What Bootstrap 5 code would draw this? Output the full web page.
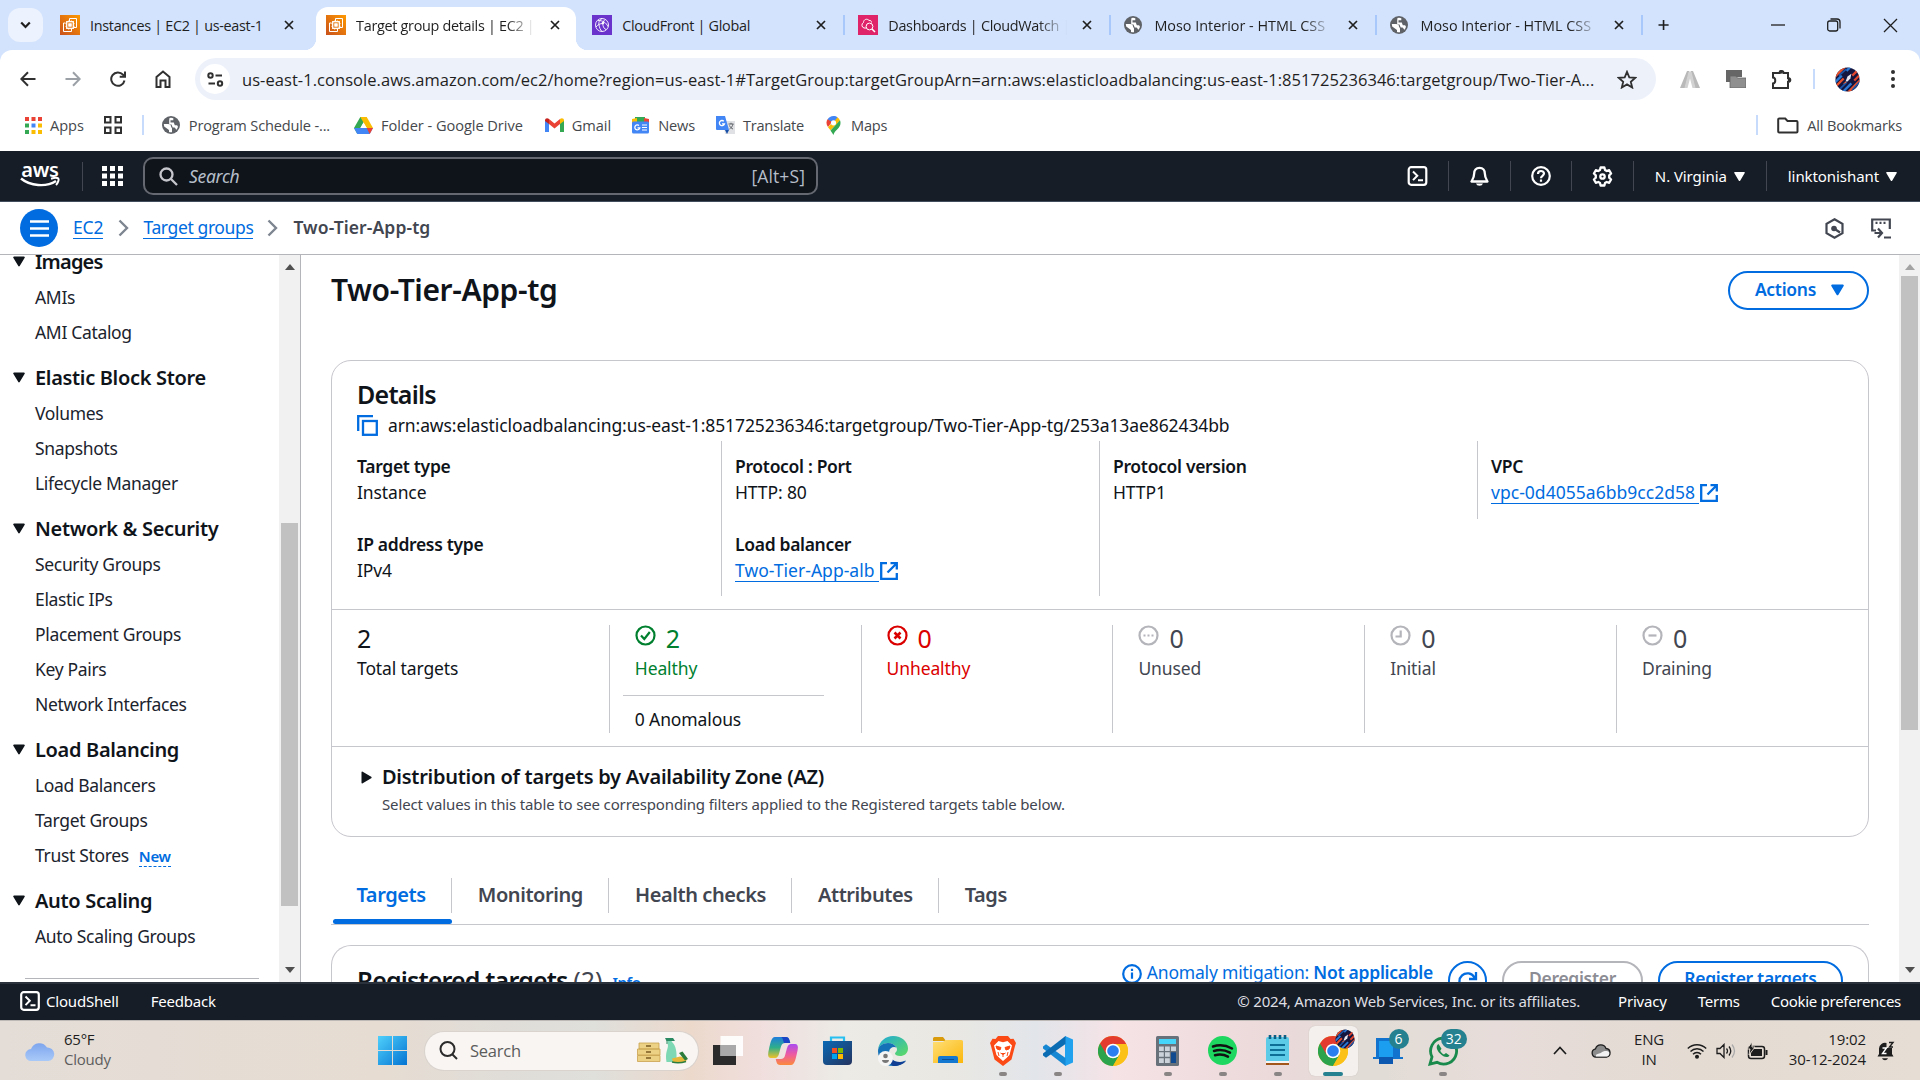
<!DOCTYPE html>
<html lang="en">
<head>
<meta charset="utf-8">
<meta name="viewport" content="width=device-width, initial-scale=1">
<title>Target group details | EC2 | us-east-1</title>
<link rel="stylesheet" href="https://cdn.jsdelivr.net/npm/bootstrap@5.3.0/dist/css/bootstrap.min.css">
<style>
:root{--ember:"Noto Sans","Open Sans",sans-serif;--segoe:"Open Sans","Noto Sans",sans-serif;--blue:#006ce0;--line:#c6c6cd;--ink:#0f141a}
html,body{height:1080px;overflow:hidden}
body{font-family:var(--ember);font-size:17.5px;line-height:25px;color:var(--ink);letter-spacing:-.12px;background:#fff}
svg{display:block;flex:none}
.strong{font-weight:600}
/* browser chrome */
.browser{font-family:var(--segoe);height:151px;background:#d3e3fd}
.strip{height:50px;letter-spacing:-.3px;font-size:14.4px;color:#1f1f1f}
.tabsearch{width:35px;height:34px;margin-left:8px;border-radius:12px;background:#ecf2fe}
.btab{width:266.1px;height:43px;margin-top:7px;padding:0 0 7px 10px;position:relative;flex:none}
.btab .ttl{width:179px;margin-left:10px;white-space:nowrap;-webkit-mask-image:linear-gradient(90deg,#000 84%,transparent)}
.btab .ttl.whole{-webkit-mask-image:none}
.btab .ttl.wide{letter-spacing:0}
.btab .shut{margin-left:15px}
.btab .sep{width:2px;height:20px;background:#a8c7fa;margin-left:17px}
.btab.cur::before{content:"";position:absolute;inset:0 6px 0 0;background:#fff;border-radius:12px 12px 0 0}
.btab.cur .foot{position:absolute;bottom:0;width:12px;height:12px}
.btab.cur .foot.l{left:-12px;background:radial-gradient(circle at 0 0,transparent 12px,#fff 12.5px)}
.btab.cur .foot.r{right:-6px;background:radial-gradient(circle at 100% 0,transparent 12px,#fff 12.5px)}
.btab>*{position:relative}
.toolbar{height:101px;background:#fff;border-radius:12px 12px 0 0}
.addr{height:58px}
.pill{width:1461px;height:42px;border-radius:21px;background:#edf1fa;margin-left:20px}
.tune{height:30px;width:30px;border-radius:50%;background:#fff;margin-left:5px}
.url{font-size:16.5px;letter-spacing:.05px;width:1356px;margin-left:12px;white-space:nowrap;color:#1f1f1f}
.vsep{width:2px;height:20px;background:#c7dbfd}
.marks{height:43px;font-size:14.6px;letter-spacing:-.05px;color:#45484c}
.marks a{display:flex;align-items:center;gap:8px;color:inherit;text-decoration:none;white-space:nowrap}
/* console header */
.awsbar{height:51px;background:#161d26;color:#fff;border-bottom:1px solid #414d5c}
.awslogo{width:40px;margin-left:20px}
.awslogo b{font-size:20px;line-height:15px;font-weight:600;letter-spacing:-.3px}
.hsearch{width:675px;height:38px;border:2px solid #656871;border-radius:10px;background:#0f141a;color:#b6bec9;padding:0 11px 0 14px;letter-spacing:-.3px}
.hsep{width:1px;height:29px;background:#424650}
.hcell{width:61.6px;height:30px;border-right:1px solid #424650}
.small15{font-size:15px;letter-spacing:-.08px}
.crumbs{height:53px;border-bottom:1px solid #b4b4bb}
.menu{width:38px;height:38px;border-radius:50%;background:var(--blue);margin-left:20px}
.lnk{color:var(--blue);text-decoration:none;border-bottom:1.5px solid var(--blue);line-height:21px;display:inline-block}
/* body */
.shell{height:727px}
.side{width:301px;flex:none;border-right:1px solid #b4b4bb;overflow:hidden}
.sidenav{width:279px;flex:none;overflow:hidden;padding-left:13px;letter-spacing:-.33px}
.sidenav h3{font-size:20px;font-weight:600;letter-spacing:-.33px;height:37px;margin:9px 0 0;display:flex;align-items:center;gap:10px}
.sidenav section:first-child h3{margin-top:-12px}
.sidenav a{display:flex;align-items:center;height:35px;padding-left:22px;color:#1b232d;text-decoration:none}
.sidenav hr{margin:24px 20px 0 12px;border:0;border-top:1px solid #b4b4bb;opacity:1}
.newtag{font-size:15px;color:var(--blue);font-weight:600;border-bottom:1.5px dashed var(--blue);line-height:20px;margin-left:10px;position:relative;top:1px}
.sbar{width:21px;flex:none;background:#f1f1f1;padding:9px 0 9px}
.thumb{width:17px;background:#c1c1c1}
.main{overflow:hidden;min-width:0;padding:0 30px 0 30px}
h1{font-size:30px;font-weight:600;letter-spacing:-.4px;line-height:38px;margin:0}
h2{font-size:25px;font-weight:600;letter-spacing:-.75px;line-height:30px;margin:0}
.pillbtn{height:39px;border:2px solid var(--blue);color:var(--blue);border-radius:20px;font-weight:600;letter-spacing:-.3px;padding:0 24px;font-size:17.5px;background:#fff}
.pillbtn:disabled{border-color:#b4b4bb;color:#8c8c94;opacity:1}
.box{border:1px solid var(--line);border-radius:20px}
.detail{height:248px;padding:18px 0 0 11px}
.kv{width:378px;height:77.5px;padding:11px 0 0 13px;border-left:1px solid transparent}
.kv.ln{border-color:var(--line)}
.kv b{display:block;font-weight:600;letter-spacing:-.32px;line-height:28px}
.kv .lnk{margin-top:2px;letter-spacing:.03px}
.stats{height:137px;border-top:1px solid var(--line);padding:15px 0 0 25px}
.stat{width:251.8px;flex:none;height:108px;border-left:1px solid var(--line);padding-left:25px}
.stat:first-child{border:0;padding-left:0}
.num{font-size:25px;line-height:26px;letter-spacing:0}
.cap{margin-top:5px}
.good{color:#00802f}.bad{color:#db0000}.dim{color:#424650}
.stat.dim svg{color:#b4b4bb}
.anom{border-top:1px solid var(--line);width:201px;margin:14px 0 0 -12px;padding:11px 0 0 12px}
.az{height:90px;border-top:1px solid var(--line);padding:15px 0 0 29px}
.az h3{font-size:20px;font-weight:600;letter-spacing:-.27px;line-height:30px;margin:0}
.tabline{border-bottom:1px solid var(--line);height:55px;margin-top:33px}
.tabline .nav-item{padding-top:8px}
.tabline .tb{display:block;height:35px;line-height:33px;padding:0 25.5px;font-size:20px;font-weight:600;letter-spacing:-.42px;color:#424650;border-right:1px solid var(--line);text-decoration:none}
.tabline .nav-item:last-child .tb{border:0}
.tabline .tb.on{color:var(--blue)}
.bar5{height:5px;background:var(--blue);border-radius:3px;margin:6px 0 0 2px}
.reg{height:60px;margin-top:20px;padding:15px 25px 0;border-bottom:0;border-radius:20px 20px 0 0}
.foot2{height:38px;background:#161d26;border-top:2px solid #2b323b;color:#fff}
/* taskbar */
.task{height:60px;font-family:var(--segoe);font-size:15px;color:#1d1d1d;letter-spacing:-.25px;border-top:1px solid #bdb9b6;background:linear-gradient(90deg,#e4ddd7 0,#e6dcd2 20%,#e0ddd8 26%,#dfdfdb 31%,#ecd9cc 36%,#f0dedd 39.5%,#ecebe6 44%,#eae8e2 49%,#e2e5ea 54%,#f5e3e6 58%,#ecd9da 66%,#e1dcd6 71%,#e7dcd9 78%,#e4dbd3 88%,#e6ddd5 100%)}
.weather{width:378px;padding-left:25px;line-height:20px}
.tsearch{width:273px;height:38px;border-radius:19px;background:#f8f5f2;box-shadow:0 0 0 1px #d9d2cd;margin-left:18px;padding:0 8px 0 14px;color:#5c5c5c;font-size:16.5px}
.ticon{width:55.05px;height:60px;position:relative;display:flex;justify-content:center;align-items:center}
.ticon.open::after{content:"";position:absolute;bottom:5px;width:8px;height:4px;border-radius:2px;background:#8a8585}
.ticon.act::before{content:"";position:absolute;left:3px;right:3px;top:5px;bottom:5px;border-radius:6px;background:#f4f0ed;box-shadow:0 0 1px #b9b2ad}
.ticon.act::after{width:20px;background:#25818f}
.bdg{position:absolute;top:8px;right:7px;height:20px;min-width:20px;border-radius:10px;background:#25818f;color:#fff;font-size:14px;line-height:20px;text-align:center;padding:0 5px;letter-spacing:0}
</style>
</head>
<body>
<svg width="0" height="0" class="position-absolute">
  <defs>
    <linearGradient id="gOr" x1="0" y1="1" x2="1" y2="0"><stop stop-color="#c8511b"/><stop offset="1" stop-color="#f90"/></linearGradient>
    <linearGradient id="gWin" x1="0" y1="0" x2="1" y2="1"><stop stop-color="#4fd0fb"/><stop offset="1" stop-color="#0473d2"/></linearGradient>
    <linearGradient id="gCl" x1="0" y1="0" x2="0" y2="1"><stop stop-color="#7ea5ee"/><stop offset="1" stop-color="#a9caf8"/></linearGradient>
    <linearGradient id="gCp1" x1="0" y1="0" x2="0" y2="1"><stop stop-color="#1f7ddc"/><stop offset=".5" stop-color="#2fae8a"/><stop offset="1" stop-color="#f0c22a"/></linearGradient>
    <linearGradient id="gCp2" x1="0" y1="0" x2="0" y2="1"><stop stop-color="#a94af0"/><stop offset=".5" stop-color="#ee5aa0"/><stop offset="1" stop-color="#fb8a3c"/></linearGradient>
    <linearGradient id="gSt" x1="0" y1="0" x2="1" y2="1"><stop stop-color="#0a69b5"/><stop offset="1" stop-color="#24345f"/></linearGradient>
    <linearGradient id="gEd" x1="0" y1="0" x2="1" y2="1"><stop stop-color="#1ea8d8"/><stop offset="1" stop-color="#5fdc62"/></linearGradient>
    <linearGradient id="gFo" x1="0" y1="0" x2="1" y2="1"><stop stop-color="#ffdf78"/><stop offset="1" stop-color="#fbb70b"/></linearGradient>
    <symbol id="ec2" viewBox="0 0 20 20"><rect width="20" height="20" fill="url(#gOr)"/><g fill="none" stroke="#fff"><path d="M9.500 6V3.500h7v9H14M5.500 8H3.500v8.500h8V14"/><rect x="6.700" y="6.700" width="6.600" height="6.600" stroke-width="1.300"/><rect x="8.800" y="8.800" width="2.400" height="2.400" fill="#fff"/><path d="M5.500 8.700h1M5.500 11.300h1M13.500 8.700h1M13.500 11.300h1M8.700 5.500v1M11.300 5.500v1M8.700 13.500v1M11.300 13.500v1"/></g></symbol>
    <symbol id="cfr" viewBox="0 0 20 20"><rect width="20" height="20" fill="#6a33cc"/><g fill="none" stroke="#fff" stroke-width=".9"><circle cx="10" cy="10" r="6.500"/><path d="M10 3.500c-3 2-3.500 4-3 6.500s1 4.500 3 6.500M6 5.500c5 0 8 2 10 6M13 4.500c-2 2-2.500 4-2 6s1.500 3.500 3 4M4 12c2-2.500 4-3.500 7-3.500"/><circle cx="11" cy="8" r=".9" fill="#fff"/></g></symbol>
    <symbol id="cwt" viewBox="0 0 20 20"><rect width="20" height="20" fill="#e0246a"/><g fill="none" stroke="#fff" stroke-width="1"><path d="M8 13H6a3 3 0 0 1-.5-5.500C5.500 4.500 9 3 11 5.500c1.500-.5 2.500.5 2.500 2"/><circle cx="11.500" cy="11.500" r="3.400"/><path d="M14 14l3 3" stroke-width="1.500"/></g></symbol>
    <symbol id="globe" viewBox="0 0 18 18"><circle cx="9" cy="9" r="9" fill="#5f6368"/><path d="M1.800 8h4.200c2 0 3 1 3 2.500 0 1 1 1 1 2v3.700a7.400 7.400 0 0 1-3-.2v-2L2.200 10.500z" fill="#fff"/><path d="M7.500 2a7.300 7.300 0 0 1 3.800.2v2H8.500V6.500h3.300l1 2.800h2.300l.9 1.500a7.300 7.300 0 0 1-1.500 3c-1-.3-1-2.300-2.300-2.300h-1.500L9.500 8.500H7.200V4z" fill="#fff"/></symbol>
    <symbol id="xx" viewBox="0 0 10 10"><path d="M1 1l8 8M9 1l-8 8" stroke="#1f1f1f" stroke-width="1.700"/></symbol>
    <symbol id="dn" viewBox="0 0 12 11"><path d="M1 .5h10a.8.800 0 0 1 .7 1.200L6.700 10a.8.800 0 0 1-1.400 0L.3 1.700A.8.800 0 0 1 1 .5z" fill="currentColor"/></symbol>
    <symbol id="chv" viewBox="0 0 11 18"><path d="M1.500 1.500L9 9l-7.500 7.500" fill="none" stroke="#7d8590" stroke-width="2.400"/></symbol>
    <symbol id="shl" viewBox="0 0 20 20"><rect x="1.200" y="1.200" width="17.600" height="17.600" rx="2.500" fill="none" stroke="#fff" stroke-width="2.200"/><path d="M5.500 5.500l4.300 4.300-4.300 4.300M10.500 14.300h5" fill="none" stroke="#fff" stroke-width="2"/></symbol>
    <symbol id="ext" viewBox="0 0 18 18"><path d="M7 1.200H1.200v15.600h15.600V11M10.500 1.200h6.300v6.300M16.500 1.500L7.500 10.500" fill="none" stroke="#006ce0" stroke-width="2.300"/></symbol>
    <symbol id="chrome" viewBox="0 0 30 30"><circle cx="15" cy="15" r="15" fill="#fbc116"/><path d="M15 15L2 7.500a15 15 0 0 0 13 22.500l6.500-11z" fill="#2ba24c"/><path d="M15 15V8h13.200A15 15 0 0 0 2 7.500L8.500 18.500z" fill="#e33b2e"/><path d="M15 8h13.300A15 15 0 0 1 15 30l6.500-11.200z" fill="#fbc116"/><circle cx="15" cy="15" r="7.300" fill="#fff"/><circle cx="15" cy="15" r="5.800" fill="#2a7ef0"/></symbol>
    <clipPath id="pc"><circle cx="13" cy="13" r="12.500"/></clipPath>
    <symbol id="planet" viewBox="0 0 26 26"><g clip-path="url(#pc)"><rect width="26" height="26" fill="#14163f"/><g fill="none" stroke-width="2.400"><path d="M-2 12L12-2M0 21L9 12M12 28L28 12" stroke="#e8502c"/><path d="M-2 18l9-9M8 26l9-9M12 4l6-6" stroke="#2b7bd6"/><path d="M4 9l8-7M18 24l8-9M5 23l7-7" stroke="#1d56a8" stroke-width="1.700"/><path d="M18 9l7-7M20 14l6-6" stroke="#e0452e"/></g><path d="M11 15l2-5 4-3-1 5-3 3z" fill="#e8e9f2"/><path d="M8 18l3-3 1 1z" fill="#ff6b3a"/></g></symbol>
  </defs>
</svg>

<header class="browser">
  <div class="strip d-flex align-items-start">
    <div class="d-flex pt-2 flex-shrink-0" style="width:50px"><div class="tabsearch d-flex align-items-center justify-content-center"><svg width="11" height="8" viewBox="0 0 11 8"><path d="M1.200 1.500L5.500 6l4.300-4.500" fill="none" stroke="#1f1f1f" stroke-width="2.200"/></svg></div></div>
    <div class="btab d-flex align-items-center"><svg width="20" height="20"><use href="#ec2"/></svg><span class="ttl whole">Instances | EC2 | us-east-1</span><svg class="shut" width="10" height="10"><use href="#xx"/></svg></div>
    <div class="btab cur d-flex align-items-center"><span class="foot l"></span><span class="foot r"></span><svg width="20" height="20"><use href="#ec2"/></svg><span class="ttl">Target group details | EC2 |</span><svg class="shut" width="10" height="10"><use href="#xx"/></svg></div>
    <div class="btab d-flex align-items-center"><svg width="20" height="20"><use href="#cfr"/></svg><span class="ttl whole">CloudFront | Global</span><svg class="shut" width="10" height="10"><use href="#xx"/></svg><span class="sep"></span></div>
    <div class="btab d-flex align-items-center"><svg width="20" height="20"><use href="#cwt"/></svg><span class="ttl">Dashboards | CloudWatch |</span><svg class="shut" width="10" height="10"><use href="#xx"/></svg><span class="sep"></span></div>
    <div class="btab d-flex align-items-center"><svg width="20" height="18" viewBox="0 0 20 18"><use href="#globe" width="18" height="18"/></svg><span class="ttl wide">Moso Interior - HTML CSS</span><svg class="shut" width="10" height="10"><use href="#xx"/></svg><span class="sep"></span></div>
    <div class="btab d-flex align-items-center"><svg width="20" height="18" viewBox="0 0 20 18"><use href="#globe" width="18" height="18"/></svg><span class="ttl wide">Moso Interior - HTML CSS</span><svg class="shut" width="10" height="10"><use href="#xx"/></svg><span class="sep"></span></div>
    <div class="d-flex align-items-center flex-fill justify-content-between" style="height:50px">
      <svg class="ms-1 ps-1" width="18" height="14" viewBox="-4 0 18 14"><path d="M7 .5v13M.5 7h13" stroke="#1f1f1f" stroke-width="2.100"/></svg>
      <div class="d-flex align-items-center" style="gap:42px;padding-right:22px"><svg width="14" height="14"><path d="M0 7h14" stroke="#1f1f1f" stroke-width="1.300"/></svg><svg width="14" height="14" fill="none" stroke="#1f1f1f" stroke-width="1.300"><rect x=".7" y="3" width="10" height="10" rx="2"/><path d="M3.500 1h6.500a3 3 0 0 1 3 3v6.500"/></svg><svg width="15" height="15"><path d="M1 1l13 13M14 1L1 14" stroke="#1f1f1f" stroke-width="1.300"/></svg></div>
    </div>
  </div>
  <div class="toolbar">
    <div class="addr d-flex align-items-center">
      <div class="d-flex align-items-center" style="gap:29px;padding-left:20px">
        <svg width="16" height="16" fill="none" stroke="#303030" stroke-width="2"><path d="M15.500 8H1.500M8 1.200L1.300 8 8 14.800"/></svg>
        <svg width="16" height="16" fill="none" stroke="#9aa0a6" stroke-width="2"><path d="M.5 8h14M8 1.200L14.700 8 8 14.800"/></svg>
        <svg width="16" height="16" fill="none" stroke="#303030" stroke-width="2"><path d="M14.500 9.500A6.700 6.700 0 1 1 13 3.700l1.500 1.800M15 .5v5.300H9.700"/></svg>
        <svg width="16" height="18" fill="none" stroke="#303030" stroke-width="2"><path d="M1.500 17V7L8 1.500 14.500 7v10h-4v-6.500h-5V17z"/></svg>
      </div>
      <div class="pill d-flex align-items-center" style="margin-left:24px">
        <div class="tune d-flex align-items-center justify-content-center"><svg width="17" height="15" fill="none" stroke="#303030" stroke-width="2"><circle cx="3.500" cy="3.500" r="2.200"/><path d="M8.500 3.500H15M1.500 11.500h6.500"/><circle cx="13" cy="11.500" r="2.200"/></svg></div>
        <div class="url">us-east-1.console.aws.amazon.com/ec2/home?region=us-east-1#TargetGroup:targetGroupArn=arn:aws:elasticloadbalancing:us-east-1:851725236346:targetgroup/Two-Tier-A...</div>
        <svg style="margin-left:19px" width="20" height="19" viewBox="0 0 20 19"><path d="M10 1.800l2.300 5.500 6 .5-4.500 3.900 1.400 5.800-5.200-3.100-5.200 3.100 1.400-5.800L1.700 7.800l6-.5z" fill="none" stroke="#303030" stroke-width="1.800"/></svg>
      </div>
      <div class="d-flex align-items-center flex-fill" style="padding-left:24px">
        <svg width="20" height="17"><path d="M0 17L7 0h2.500L5 17zM20 17L13 0h-2.500L15 17z" fill="#b9b9b9"/><path d="M8.500 1h3L15.500 17h-3L10 7.500 7.500 17h-3z" fill="#d2d2d2"/></svg>
        <svg style="margin-left:26px" width="20" height="18"><path d="M0 0h16v7H8v5H0z" fill="#666"/><path d="M4 6h6l1.500 2H20v10H4z" fill="#8f8f8f" stroke="#666" stroke-width=".8"/></svg>
        <svg style="margin-left:25px" width="21" height="21" viewBox="0 0 21 21"><path d="M2 4h6.500a2 2 0 0 1 4 0H17v5a2 2 0 0 1 0 4v6H2v-4.500c3-.3 3-5.700 0-6z" fill="none" stroke="#303030" stroke-width="2"/><circle cx="10" cy="2.800" r="1.900" fill="#303030"/><circle cx="18.500" cy="11" r="1.900" fill="#303030"/></svg>
        <span class="vsep" style="margin-left:21px"></span>
        <svg style="margin-left:20px" width="25" height="25"><use href="#planet"/></svg>
        <svg style="margin-left:31px" width="4" height="18" fill="#303030"><circle cx="2" cy="2" r="2"/><circle cx="2" cy="9" r="2"/><circle cx="2" cy="16" r="2"/></svg>
      </div>
    </div>
    <nav class="marks d-flex align-items-center" style="padding:0 18px 9px 25px">
      <a href="#"><svg width="17" height="17"><g fill="#ea4335"><path d="M0 0h4v4H0zM6.500 0h4v4h-4zM13 0h4v4h-4z"/></g><path d="M0 6.500h4v4H0z" fill="#34a853"/><path d="M6.500 6.500h4v4h-4z" fill="#4285f4"/><path d="M13 6.500h4v4h-4zM6.500 13h4v4h-4zM13 13h4v4h-4z" fill="#fbbc04"/><path d="M0 13h4v4H0z" fill="#34a853"/></svg>Apps</a>
      <a href="#" style="margin-left:20px"><svg width="18" height="18" fill="none" stroke="#303030" stroke-width="2"><path d="M1 1h5.500v5.500H1zM11.500 1H17v5.500h-5.500zM1 11.500h5.500V17H1zM11.500 11.500H17V17h-5.500z"/></svg></a>
      <span class="vsep" style="margin-left:20px"></span>
      <a href="#" style="margin-left:18px;letter-spacing:-.17px"><svg width="18" height="18"><use href="#globe"/></svg><span style="padding-left:1px">Program Schedule -...</span></a>
      <a href="#" style="margin-left:24px"><svg width="19" height="17" viewBox="0 0 19 17"><path d="M6.300 0h6.400l-3.200 5.500L3.300 17 0 11z" fill="#34a853"/><path d="M6.300 0h6.400L19 11h-6.300z" fill="#fbbc04"/><path d="M0 11h19l-3.300 6H3.300z" fill="#4285f4"/><path d="M19 11h-6.300l3 6z" fill="#ea4335"/><path d="M9.500 5.500L6.300 11h6.400z" fill="#fff"/></svg>Folder - Google Drive</a>
      <a href="#" style="margin-left:22px"><svg width="19" height="14" viewBox="0 0 19 14"><path d="M0 2v12h4V5z" fill="#4285f4"/><path d="M19 2v12h-4V5z" fill="#34a853"/><path d="M4 1l5.500 4.500L15 1v5l-5.500 4.500L4 6z" fill="#ea4335"/><path d="M0 2.500C0 0 2.500-.5 4 1v5L0 3z" fill="#c5221f"/><path d="M19 2.500C19 0 16.500-.5 15 1v5l4-3z" fill="#fbbc04"/></svg>Gmail</a>
      <a href="#" style="margin-left:20px;letter-spacing:-.15px"><svg width="19" height="17" viewBox="0 0 19 17"><path d="M4 0h10v6H4z" fill="#34a853"/><path d="M1 2l5-1v6H1z" fill="#fbbc04"/><path d="M18 2l-5-1v6h5z" fill="#ea4335"/><rect x="1" y="4.500" width="17" height="12" rx="1.500" fill="#4285f4"/><path d="M11 8h5M11 10.500h5M11 13h5" stroke="#fff" stroke-width="1.200"/><path d="M8 8.500a2.500 2.500 0 1 0 .8 2.300H6.500" fill="none" stroke="#fff" stroke-width="1.300"/></svg>News</a>
      <a href="#" style="margin-left:21px;letter-spacing:-.25px"><svg width="19" height="18" viewBox="0 0 19 18"><path d="M7 5h12v13H9z" fill="#dfe1e5"/><path d="M0 0h9l4 14H1a1 1 0 0 1-1-1z" fill="#4285f4"/><path d="M13 14l-2 4-2-4z" fill="#174ea6"/><path d="M7.800 5.200a2.600 2.600 0 1 0 .7 2.600H6" fill="none" stroke="#fff" stroke-width="1.300"/><path d="M12.500 8h5M15 6.800V8M17 8c-.5 2.500-2 4-3.500 5M13.500 9.500c.6 1.500 2 3 3.500 3.500" fill="none" stroke="#5f6368"/></svg>Translate</a>
      <a href="#" style="margin-left:22px;letter-spacing:-.2px"><svg width="15" height="19" viewBox="0 0 15 19"><path d="M7.500 0a7 7 0 0 0-6 3.500l3.800 3L11 1A7 7 0 0 0 7.500 0z" fill="#4285f4"/><path d="M1.500 3.300A7 7 0 0 0 2 11l4-5z" fill="#ea4335"/><path d="M11 .9L2 11.300l2.500 3L14 4.500A7.500 7.500 0 0 0 11 .9z" fill="#fbbc04"/><path d="M14 4.300L4.500 14.500 7.500 19c1-5 7-6.500 7-12a7 7 0 0 0-.5-2.700z" fill="#34a853"/><path d="M5 9.500L11.500 1.300 8 .1z" fill="#4285f4"/><circle cx="7.500" cy="6.800" r="2.600" fill="#fff"/></svg><span style="padding-left:2px">Maps</span></a>
      <span class="vsep ms-auto"></span>
      <a href="#" style="margin-left:19px;letter-spacing:-.2px"><svg width="22" height="17" fill="none" stroke="#303030" stroke-width="2"><path d="M1.200 2.500a1 1 0 0 1 1-1h6L10.500 4h9a1 1 0 0 1 1 1v9.500a1 1 0 0 1-1 1H2.200a1 1 0 0 1-1-1z"/></svg>All Bookmarks</a>
    </nav>
  </div>
</header>

<div class="awsbar d-flex align-items-center">
  <div class="awslogo text-center" style="margin-top:-3px"><b class="d-block">aws</b><svg width="40" height="11" viewBox="0 0 40 11"><path d="M1 1.500C10 9 26 10.500 36 4" fill="none" stroke="#fff" stroke-width="2.400"/><path d="M31 1.800c3-1 6.500-1 7.300-.3.800 1-.3 4.500-2.300 6.500" fill="none" stroke="#fff" stroke-width="2"/></svg></div>
  <span class="hsep" style="margin-left:22px"></span>
  <svg style="margin-left:19px" width="21" height="20" fill="#fff"><path d="M0 0h5v5H0zM8 0h5v5H8zM16 0h5v5h-5zM0 7.500h5v5H0zM8 7.500h5v5H8zM16 7.500h5v5h-5zM0 15h5v5H0zM8 15h5v5H8zM16 15h5v5h-5z"/></svg>
  <div class="hsearch d-flex align-items-center" style="margin-left:20px"><svg width="19" height="19" fill="none" stroke="#c6c6cd" stroke-width="2.300"><circle cx="7.500" cy="7.500" r="6"/><path d="M12 12l6 6"/></svg><em style="margin-left:11px">Search</em><span class="ms-auto" style="letter-spacing:.1px;font-family:'Open Sans','Noto Sans',sans-serif">[Alt+S]</span></div>
  <div class="ms-auto d-flex align-items-center small15">
    <div class="hcell d-flex align-items-center justify-content-center"><svg width="21" height="20"><use href="#shl"/></svg></div>
    <div class="hcell d-flex align-items-center justify-content-center"><svg width="19" height="21" viewBox="0 0 19 21"><path d="M9.500 1.800c-3.600 0-5.300 2.600-5.300 5.500 0 4-1.400 6-2.700 8.200h16c-1.300-2.200-2.700-4.200-2.700-8.200 0-2.900-1.700-5.500-5.300-5.500z" fill="none" stroke="#fff" stroke-width="2.300" stroke-linejoin="round"/><path d="M6 17.500a3.600 3 0 0 0 7 0z" fill="#fff"/></svg></div>
    <div class="hcell d-flex align-items-center justify-content-center"><svg width="20" height="20" fill="none" stroke="#fff" stroke-width="2.200"><circle cx="10" cy="10" r="8.800"/><path d="M7 8c0-4 6-3.800 6-.4 0 2.200-3 2.200-3 4.600M10 13.500v2.200"/></svg></div>
    <div class="hcell d-flex align-items-center justify-content-center"><svg width="21" height="21" viewBox="0 0 21 21" fill="none" stroke="#fff" stroke-width="2.300" stroke-linejoin="round"><path d="M8.600 1.500h3.800l.6 2.500 1.700 1 2.500-.8 1.900 3.300-1.900 1.800v2.400l1.900 1.800-1.900 3.300-2.500-.8-1.700 1-.6 2.500H8.600L8 17l-1.700-1-2.500.8-1.900-3.300 1.900-1.800V9.300L1.900 7.500l1.900-3.300 2.500.8L8 4z"/><circle cx="10.500" cy="10.500" r="2.200"/></svg></div>
    <div class="d-flex align-items-center" style="width:133px;height:30px;border-right:1px solid #424650;padding-left:21px;gap:7px">N. Virginia<svg width="11" height="11"><use href="#dn"/></svg></div>
    <div class="d-flex align-items-center" style="padding:0 23px 0 21px;gap:7px">linktonishant<svg width="11" height="11"><use href="#dn"/></svg></div>
  </div>
</div>

<div class="crumbs d-flex align-items-center">
  <div class="menu d-flex align-items-center justify-content-center"><svg width="19" height="17"><path d="M0 1.500h19M0 8.500h19M0 15.500h19" stroke="#fff" stroke-width="2.400"/></svg></div>
  <a class="lnk" href="#" style="margin-left:15px">EC2</a><svg style="margin:0 14px 0 15px" width="11" height="18"><use href="#chv"/></svg>
  <a class="lnk" href="#" style="letter-spacing:-.38px">Target groups</a><svg style="margin:0 15px 0 14px" width="11" height="18"><use href="#chv"/></svg>
  <span class="strong dim" style="letter-spacing:.1px;margin-top:-1px">Two-Tier-App-tg</span>
  <div class="ms-auto d-flex align-items-center" style="gap:27px;padding-right:29px">
    <svg width="19" height="21" viewBox="0 0 19 21"><path d="M9.500 1.300l8 4.600v9.200l-8 4.600-8-4.600V5.900z" fill="none" stroke="#424650" stroke-width="2.200"/><circle cx="9" cy="10.500" r="2.800" fill="#424650"/><path d="M9 10.500l6 4" stroke="#424650" stroke-width="2.200"/></svg>
    <svg width="20" height="21" viewBox="0 0 20 21" fill="none" stroke="#424650" stroke-width="2.200"><path d="M5 12.500H1.200v-11h17.600v9.500M3.500 15h7M7 10.500l4 4.500-4 4.500M13 19.500h7"/><path d="M4.500 4.800h2M8.500 4.800h2M12.500 4.800h2"/></svg>
  </div>
</div>

<div class="shell d-flex">
  <aside class="side d-flex">
    <nav class="sidenav">
      <section><h3><svg width="12" height="11"><use href="#dn"/></svg><span style="letter-spacing:-.8px">Images</span></h3><a href="#">AMIs</a><a href="#">AMI Catalog</a></section>
      <section><h3><svg width="12" height="11"><use href="#dn"/></svg>Elastic Block Store</h3><a href="#">Volumes</a><a href="#">Snapshots</a><a href="#">Lifecycle Manager</a></section>
      <section><h3><svg width="12" height="11"><use href="#dn"/></svg>Network &amp; Security</h3><a href="#">Security Groups</a><a href="#">Elastic IPs</a><a href="#">Placement Groups</a><a href="#">Key Pairs</a><a href="#">Network Interfaces</a></section>
      <section><h3><svg width="12" height="11"><use href="#dn"/></svg>Load Balancing</h3><a href="#">Load Balancers</a><a href="#">Target Groups</a><a href="#">Trust Stores <span class="newtag">New</span></a></section>
      <section><h3><svg width="12" height="11"><use href="#dn"/></svg>Auto Scaling</h3><a href="#">Auto Scaling Groups</a></section>
      <hr>
    </nav>
    <div class="sbar d-flex flex-column align-items-center"><svg width="10" height="6"><path d="M0 6L5 0l5 6z" fill="#505050"/></svg><div class="thumb" style="height:383px;margin-top:253px"></div><svg class="mt-auto" width="10" height="6"><path d="M0 0l5 6 5-6z" fill="#505050"/></svg></div>
  </aside>

  <main class="main flex-fill">
    <div class="d-flex justify-content-between" style="padding-top:16px"><h1>Two-Tier-App-tg</h1><button class="pillbtn btn d-flex align-items-center" style="gap:15px;padding:0 23px 2px 25px">Actions<svg width="13" height="12"><use href="#dn"/></svg></button></div>

    <section class="box" style="margin-top:50px">
      <div class="detail">
        <div style="padding-left:14px"><h2>Details</h2>
        <div class="d-flex align-items-center" style="gap:10px;height:32px"><svg width="21" height="21" fill="none" stroke="#006ce0" stroke-width="2.300"><path d="M1.200 16V1.200H16"/><rect x="6" y="6" width="13.800" height="13.800"/></svg><span style="letter-spacing:-.1px">arn:aws:elasticloadbalancing:us-east-1:851725236346:targetgroup/Two-Tier-App-tg/253a13ae862434bb</span></div></div>
        <div class="d-flex flex-wrap">
          <div class="kv"><b>Target type</b>Instance</div>
          <div class="kv ln"><b>Protocol : Port</b>HTTP: 80</div>
          <div class="kv ln"><b>Protocol version</b>HTTP1</div>
          <div class="kv ln"><b>VPC</b><div class="d-flex"><a class="lnk pe-1" href="#">vpc-0d4055a6bb9cc2d58</a><svg class="mt-1" style="margin-left:1px" width="18" height="18"><use href="#ext"/></svg></div></div>
          <div class="kv"><b>IP address type</b>IPv4</div>
          <div class="kv ln"><b>Load balancer</b><div class="d-flex"><a class="lnk pe-1" href="#">Two-Tier-App-alb</a><svg class="mt-1" style="margin-left:1px" width="18" height="18"><use href="#ext"/></svg></div></div>
          <div class="kv ln"></div>
        </div>
      </div>
      <div class="stats d-flex">
        <div class="stat"><div class="num">2</div><div class="cap">Total targets</div></div>
        <div class="stat"><div class="good"><div class="num d-flex" style="gap:10px"><svg width="21" height="21" viewBox="0 0 21 21" fill="none" stroke="currentColor" stroke-width="2.200"><circle cx="10.500" cy="10.500" r="9"/><path d="M6 10.500l3.300 3.500 5.500-7"/></svg>2</div><div class="cap">Healthy</div></div><div class="anom">0 Anomalous</div></div>
        <div class="stat bad"><div class="num d-flex" style="gap:10px"><svg width="21" height="21" viewBox="0 0 21 21" fill="none" stroke="currentColor" stroke-width="2.200"><circle cx="10.500" cy="10.500" r="9"/><path d="M7.500 7.500l6 6M13.500 7.500l-6 6" stroke-width="2.600"/></svg>0</div><div class="cap">Unhealthy</div></div>
        <div class="stat dim"><div class="num d-flex" style="gap:10px"><svg width="21" height="21" viewBox="0 0 21 21" fill="none" stroke="currentColor" stroke-width="2.200"><circle cx="10.500" cy="10.500" r="9"/><path d="M5.500 10.500h2M9.500 10.500h2M13.500 10.500h2"/></svg>0</div><div class="cap">Unused</div></div>
        <div class="stat dim"><div class="num d-flex" style="gap:10px"><svg width="21" height="21" viewBox="0 0 21 21" fill="none" stroke="currentColor" stroke-width="2.200"><circle cx="10.500" cy="10.500" r="9"/><path d="M10.700 5.500v6H5.500"/></svg>0</div><div class="cap">Initial</div></div>
        <div class="stat dim"><div class="num d-flex" style="gap:10px"><svg width="21" height="21" viewBox="0 0 21 21" fill="none" stroke="currentColor" stroke-width="2.200"><circle cx="10.500" cy="10.500" r="9"/><path d="M6.500 10.500h8"/></svg>0</div><div class="cap">Draining</div></div>
      </div>
      <div class="az">
        <div class="d-flex align-items-center"><svg width="11" height="13" style="margin-right:10px"><path d="M.5 1.300v10.400a.8.800 0 0 0 1.200.6l8.500-5.100a.8.800 0 0 0 0-1.400L1.700.7a.8.800 0 0 0-1.200.6z" fill="#0f141a"/></svg><h3>Distribution of targets by Availability Zone (AZ)</h3></div>
        <div class="small15 dim" style="padding-left:21px;letter-spacing:-.143px">Select values in this table to see corresponding filters applied to the Registered targets table below.</div>
      </div>
    </section>

    <ul class="tabline nav flex-nowrap">
      <li class="nav-item"><a class="tb on" href="#">Targets</a><div class="bar5"></div></li>
      <li class="nav-item"><a class="tb" href="#">Monitoring</a></li>
      <li class="nav-item"><a class="tb" href="#">Health checks</a></li>
      <li class="nav-item"><a class="tb" href="#">Attributes</a></li>
      <li class="nav-item"><a class="tb" href="#">Tags</a></li>
    </ul>

    <section class="box reg d-flex align-items-start">
      <h2 style="padding-top:4px;letter-spacing:-.85px">Registered targets <span class="fw-normal dim" style="letter-spacing:0">(2)</span></h2>
      <span class="strong" style="font-size:15px;color:var(--blue);margin:9px 0 0 10px;letter-spacing:-.5px">Info</span>
      <div class="ms-auto d-flex align-items-start" style="color:var(--blue)">
        <svg style="margin:3px 5px 0 0" width="20" height="20" fill="none" stroke="#006ce0" stroke-width="2.200"><circle cx="10" cy="10" r="8.800"/><path d="M10 8.500v6.200M10 4.800v2.200"/></svg>
        <span style="letter-spacing:-.2px;margin-top:-1px">Anomaly mitigation: <span class="strong" style="letter-spacing:-.28px">Not applicable</span></span>
        <button class="pillbtn btn p-0 d-flex align-items-center justify-content-center" style="width:39px;margin-left:15px"><svg width="21" height="20" fill="none" stroke="#006ce0" stroke-width="2.300"><path d="M18 13A8 8 0 1 1 17.500 6.500M19 1v7h-7"/></svg></button>
        <button class="pillbtn btn" style="margin-left:15px;width:141px;padding:0 0 4px" disabled>Deregister</button>
        <button class="pillbtn btn" style="margin-left:15px;width:185px;padding:0 0 4px">Register targets</button>
      </div>
    </section>
  </main>
  <div class="sbar d-flex flex-column align-items-center"><svg width="10" height="6"><path d="M0 6L5 0l5 6z" fill="#a3a3a3"/></svg><div class="thumb" style="height:454px;margin-top:6px"></div><svg class="mt-auto" width="10" height="6"><path d="M0 0l5 6 5-6z" fill="#505050"/></svg></div>
</div>

<footer class="foot2 d-flex align-items-center small15" style="padding:0 19px 2px 20px;letter-spacing:-.2px">
  <svg width="20" height="20"><use href="#shl"/></svg><span style="margin-left:6px">CloudShell</span><span style="margin-left:32px">Feedback</span>
  <span class="ms-auto" style="color:#dedee3">© 2024, Amazon Web Services, Inc. or its affiliates.</span><span style="margin-left:38px">Privacy</span><span style="margin-left:31px">Terms</span><span style="margin-left:31px;letter-spacing:-.3px">Cookie preferences</span>
</footer>

<div class="task d-flex align-items-center">
  <div class="weather d-flex align-items-center"><svg width="30" height="20" viewBox="0 0 30 20"><path d="M6.500 20a6 6 0 0 1-.5-12A9 9 0 0 1 22 6.500 6.800 6.800 0 0 1 23.500 20z" fill="url(#gCl)"/></svg><div style="padding-left:9px;margin-top:-4px">65°F<br><span style="color:#5d5d5d">Cloudy</span></div></div>
  <svg width="29" height="29"><path d="M0 0h14v14H0zM15 0h14v14H15zM0 15h14v14H0zM15 15h14v14H15z" fill="url(#gWin)"/></svg>
  <div class="tsearch d-flex align-items-center"><svg width="19" height="19" fill="none" stroke="#2b2b2b" stroke-width="2"><circle cx="8.500" cy="8" r="7"/><path d="M13.500 13.500l4.500 4.500"/></svg><span style="margin-left:12px">Search</span>
    <svg class="ms-auto" width="54" height="26" viewBox="0 0 54 26"><g fill="#ecd184" stroke="#c9a24e" stroke-width=".8"><path d="M3 5h20v6H3zM1.500 11H24v6H1.500zM1.500 17.500H24v6H1.500z"/></g><path d="M10 8h5M10 14h5M10 20h5" stroke="#7a5c22" stroke-width="1.500"/><path d="M31.500 4l.5-2h3l1 2c4 4 5 9 4.500 20h-10c-1.500-9 1-12 1.500-16z" fill="#7ed8b4"/><path d="M29 0h8l2 3h-8.500z" fill="#2c8a62"/><path d="M31 2v4" stroke="#2c8a62"/><path d="M36 20.500l8-2 7 1.500-1 4H37z" fill="#e6b83a"/><path d="M43 15l3.500-1.500L52 21l-3 1.500z" fill="#2c7d3d"/><path d="M36 24c4 1 9 1 14-.5" stroke="#2c7d3d" stroke-width="1.500" fill="none"/></svg></div>
  <div class="d-flex" style="margin-left:2px">
    <div class="ticon"><svg width="30" height="29"><path d="M0 9h23v20H0z" fill="#2b2b2b"/><path d="M7.500 0H30v20H7.500z" fill="#fff" opacity=".9"/><path d="M7.500 9H23v11H7.500z" fill="#a9a9a9"/></svg></div>
    <div class="ticon"><svg width="30" height="28" viewBox="0 0 30 28"><path d="M7 0h11c3 0 3.500 3 4.300 6H17c-4 0-4 4-5.500 9-1 4-2 6-5 6H3c-4 0-3-5-2-9S3 0 7 0z" fill="url(#gCp1)"/><path d="M13 0h5c3 0 3.500 3 4.300 6H16c-1-3-1.500-6-3-6z" fill="#1b45c4"/><path d="M23 28H12c-3 0-3.500-3-4.300-6H13c4 0 4-4 5.500-9 1-4 2-6 5-6H27c4 0 3 5 2 9s-2 12-6 12z" fill="url(#gCp2)"/></svg></div>
    <div class="ticon"><svg width="29" height="29" viewBox="0 0 29 29"><path d="M8 6V1.500h13V6" fill="none" stroke="#27c0f0" stroke-width="2.200"/><path d="M0 5h29v20a4 4 0 0 1-4 4H4a4 4 0 0 1-4-4z" fill="url(#gSt)"/><path d="M9 12h5v5H9z" fill="#f25022"/><path d="M15 12h5v5h-5z" fill="#7fba00"/><path d="M9 18h5v5H9z" fill="#00a4ef"/><path d="M15 18h5v5h-5z" fill="#ffb900"/></svg></div>
    <div class="ticon"><svg width="30" height="30" viewBox="0 0 30 30"><path d="M0 14C1 5 8 0 15 0c9 0 15 6 15 12.500 0 5-4 7.500-8 7.500-3 0-5-1-5-2.500 0-1 2-1.500 2-4C19 10 15 7 10 7 5 7 1 10 0 14z" fill="url(#gEd)"/><path d="M0 15c0-5 5-8 10-8 4 0 7 2 8.500 4.500-3-1.500-7 0-7.500 4.500-.5 6 5 11 12 10 2-.2 3.500-1 5-2-3 4-7 6-13 6C6 30 0 23 0 15z" fill="#1471b8"/><path d="M15 30c-4-3-5-8-4.500-12 2 6 8 10 17.500 7-3 3.500-7 5-13 5z" fill="#103f94"/><circle cx="7.500" cy="22.500" r="7.500" fill="#f5f5f5"/><circle cx="7.500" cy="20" r="2.300" fill="#777"/><path d="M4 24h7c0 4-7 4-7 0z" fill="#777"/></svg></div>
    <div class="ticon"><svg width="30" height="27" viewBox="0 0 30 27"><path d="M0 1.500A1.500 1.500 0 0 1 1.500 0H10l3 4H0z" fill="#d99a0b"/><path d="M0 5h10l2.500-2H28.500A1.500 1.500 0 0 1 30 4.500V26H0z" fill="url(#gFo)"/><path d="M5 26v-5a2 2 0 0 1 2-2h16a2 2 0 0 1 2 2v5z" fill="#1478d0"/><path d="M9 22.500h12" stroke="#0b4f94"/></svg></div>
    <div class="ticon open"><svg width="26" height="30" viewBox="0 0 26 30"><path d="M8 0h10l2.500 3 3-.3L26 7l-1 3-3.500 13.500L13 30l-8.500-6.500L1 10 0 7l2.500-4.300 3 .3z" fill="#fb4a16"/><path d="M8.500 5l4.500 1.200L17.500 5 22 9.500l-1.200 4.500-1.300 5-3 3-3.500 3-3.500-3-3-3-1.300-5L4 9.500z" fill="#fff"/><path d="M6 10l5 1.500-1 2.500-3-1zM20 10l-5 1.500 1 2.500 3-1zM10.500 17l2.500 1.500 2.500-1.500M13 18v3M8 16l1 4M18 16l-1 4" fill="#fb4a16" stroke="#fb4a16"/></svg></div>
    <div class="ticon open"><svg width="30" height="30" viewBox="0 0 30 30"><path d="M22 0l8 3.500v23L22 30z" fill="#22a1ef"/><path d="M0 10.500l3-2.300L22.500 22v8L0 12.500z" fill="#1687d3"/><path d="M0 19.500l3 2.300L22.500 8V0L0 17.500z" fill="#0b6cb3"/></svg></div>
    <div class="ticon"><svg width="30" height="30"><use href="#chrome"/></svg></div>
    <div class="ticon open"><svg width="23" height="30"><rect width="23" height="30" rx="1.500" fill="#68707a"/><path d="M3 3h17v5H3z" fill="#45d5fa"/><path d="M3 10.500h4.800v4.500H3zM9 10.500h4.800v4.500H9zM15 10.500h5v4.500h-5zM3 16.300h4.800v4.500H3zM9 16.300h4.800v4.500H9zM3 22.200h4.800V27H3zM9 22.200h4.800V27H9z" fill="#ccd2da"/><path d="M15 16.300h5V27h-5z" fill="#124a90"/></svg></div>
    <div class="ticon open"><svg width="29" height="29" viewBox="0 0 29 29"><circle cx="14.500" cy="14.500" r="14.500" fill="#1ed760"/><path d="M5 10.500c6-2 13-1.300 19 2M6 15c5-1.500 11-1 16 1.700M7 19.200c4.500-1.200 9-.8 13 1.500" fill="none" stroke="#111" stroke-width="2.500" stroke-linecap="round"/></svg></div>
    <div class="ticon open"><svg width="23" height="31" viewBox="0 0 23 31"><rect y="2" width="23" height="26" rx="2" fill="#5ccbe8"/><path d="M4 0v4M9 0v4M14 0v4M19 0v4" stroke="#0d5f83" stroke-width="2.600"/><path d="M4 10h15M4 15h15M4 20h15" stroke="#0d6f95" stroke-width="2"/><path d="M0 26h23v2H0z" fill="#f4f4f4"/><path d="M0 28h23v2H0z" fill="#a3561a"/></svg></div>
    <div class="ticon open act"><svg class="position-relative" width="30" height="30"><use href="#chrome"/></svg><svg class="position-absolute" style="right:6px;top:8px" width="20" height="20"><use href="#planet"/></svg></div>
    <div class="ticon"><svg width="30" height="27"><path d="M3 1h24v19h3v2H0v-2h3z" fill="#1173cd"/><path d="M6 4h14v23H6z" fill="#1b9df0"/><path d="M6 20h14v7H6z" fill="#0c57b0"/></svg><span class="bdg">6</span></div>
    <div class="ticon open"><svg width="30" height="30" viewBox="0 0 30 30"><path d="M2 28l2-7A13 13 0 1 1 9 26.300z" fill="none" stroke="#1a8a4c" stroke-width="2.800"/><path d="M10.500 8c-3 2-2 6 1.500 9.500s7.500 5 9.500 2l-3.500-2.500-2 1.500c-1.500-.7-3-2.200-3.800-3.800l1.300-2z" fill="#1a8a4c"/></svg><span class="bdg" style="right:4px">32</span></div>
  </div>
  <div class="ms-auto d-flex align-items-center text-center" style="line-height:20.5px;padding-right:25px">
    <svg width="14" height="9"><path d="M1 8l6-6.500L13 8" fill="none" stroke="#1d1d1d" stroke-width="1.700"/></svg>
    <svg style="margin-left:24px" width="20" height="15" viewBox="0 0 20 15"><path d="M5 14.200a4.200 4.200 0 0 1-.5-8.300A5.500 5.500 0 0 1 15 5.500a4.400 4.400 0 0 1 .5 8.700z" fill="#8c8c8c" stroke="#1d1d1d" stroke-width="1.300"/><path d="M5 13.500c-1-3 4-2.500 6-4.500 2-1.500 6-1.500 7 0 1 3-1 4.500-2.500 4.500z" fill="#f2f2f2"/></svg>
    <div style="margin:-3px 0 0 23px;width:30px">ENG<br>IN</div>
    <svg style="margin-left:23px" width="20" height="16" viewBox="0 0 20 16" fill="none" stroke="#1d1d1d" stroke-width="1.400"><path d="M.8 5.500a13 13 0 0 1 18.400 0M3.500 8.500a9 9 0 0 1 13 0M6 11.200a5.500 5.500 0 0 1 8 0"/><circle cx="10" cy="13.700" r="1.300" fill="#1d1d1d"/></svg>
    <svg style="margin-left:9px" width="20" height="16" viewBox="0 0 20 16" fill="none" stroke="#1d1d1d" stroke-width="1.300"><path d="M1 5.500h3l4-4v13l-4-4H1zM10.500 5.500q2 2.500 0 5M13 3.500q3.500 4.500 0 9"/><path d="M16 1.500q5 6.500 0 13" stroke="#aaa"/></svg>
    <svg style="margin-left:11px" width="21" height="18" viewBox="0 0 21 18"><rect x="1.500" y="4.500" width="16" height="12" rx="2.500" fill="none" stroke="#1d1d1d" stroke-width="1.500"/><path d="M4 7h11v7H4zM18.500 8h2v5h-2z" fill="#1d1d1d"/><path d="M5 0L0 7h3l-1 6 6-8H5z" fill="#1d1d1d" stroke="#e6dcd4" stroke-width=".9"/></svg>
    <div class="text-end" style="margin:-3px 0 0 18px;width:80px;letter-spacing:-.1px">19:02<br>30-12-2024</div>
    <svg style="margin-left:11px" width="18" height="20" viewBox="0 0 18 20"><path d="M2 13V7.500A6 6 0 0 1 9.500 2v5H15v6l1.500 2.500H.5z" fill="#1d1d1d"/><path d="M5 17.300h6c-1 2.500-5 2.500-6 0z" fill="#1d1d1d"/><path d="M12 1.500h4L12.500 6H16" fill="none" stroke="#1d1d1d" stroke-width="1.400"/><path d="M5.500 7h4l-4 5.500h4" stroke="#fff" stroke-width="1.400" fill="none"/></svg>
  </div>
</div>
<script src="https://cdn.jsdelivr.net/npm/bootstrap@5.3.0/dist/js/bootstrap.bundle.min.js"></script>
</body>
</html>
